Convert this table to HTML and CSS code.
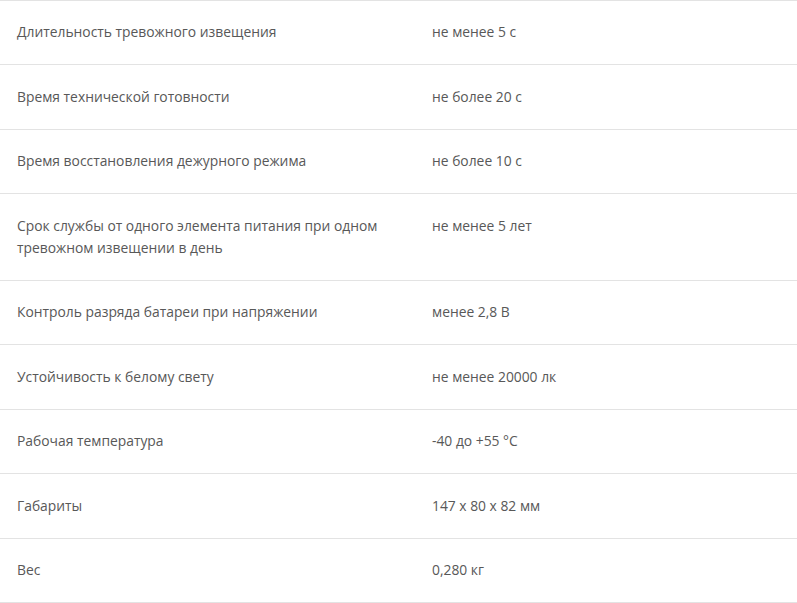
FILE: index.html
```html
<!DOCTYPE html>
<html lang="ru">
<head>
<meta charset="utf-8">
<link rel="stylesheet" href="styles.css">
</head>
<body>
<table class="specs">
<tbody>
<tr><td class="name">Длительность тревожного извещения</td><td class="val">не менее 5 с</td></tr>
<tr><td class="name">Время технической готовности</td><td class="val">не более 20 с</td></tr>
<tr><td class="name">Время восстановления дежурного режима</td><td class="val">не более 10 с</td></tr>
<tr><td class="name">Срок службы от одного элемента питания при одном тревожном извещении в день</td><td class="val">не менее 5 лет</td></tr>
<tr><td class="name">Контроль разряда батареи при напряжении</td><td class="val">менее 2,8 В</td></tr>
<tr><td class="name">Устойчивость к белому свету</td><td class="val">не менее 20000 лк</td></tr>
<tr><td class="name">Рабочая температура</td><td class="val">-40 до +55 °C</td></tr>
<tr><td class="name">Габариты</td><td class="val">147 x 80 x 82 мм</td></tr>
<tr><td class="name">Вес</td><td class="val">0,280 кг</td></tr>
</tbody>
</table>
</body>
</html>
```
FILE: styles.css
```css
html, body {
  margin: 0;
  padding: 0;
  background: #fff;
}
body {
  font-family: "Open Sans", "Liberation Sans", sans-serif;
  font-size: 13.85px;
  line-height: 22.5px;
  color: #585858;
}
.specs {
  width: 797px;
  border-collapse: collapse;
  border-top: 1px solid #e3e3e3;
}
.specs td {
  border-bottom: 1px solid #e3e3e3;
  padding: 20.45px 16px 20.45px 17px;
  vertical-align: top;
  text-align: left;
}
.specs .name {
  width: 383px;
}
.specs .val {
  padding-left: 16px;
}
```
